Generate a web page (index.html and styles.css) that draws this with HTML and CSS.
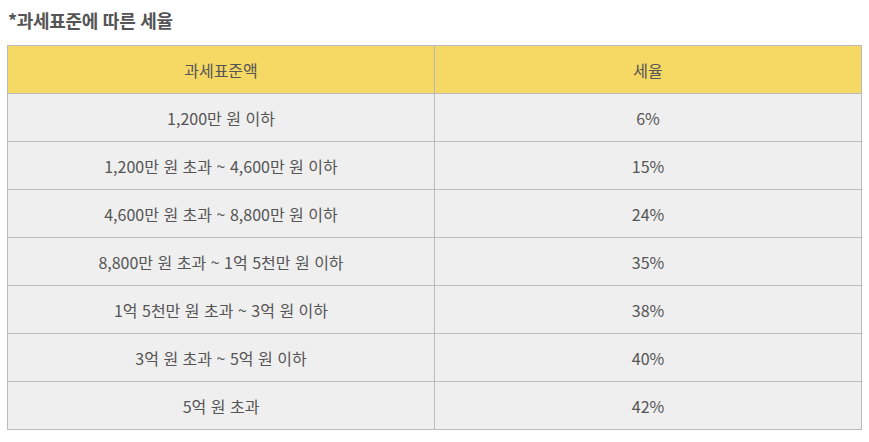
FILE: index.html
```html
<!DOCTYPE html>
<html lang="ko">
<head>
<meta charset="utf-8">
<link rel="stylesheet" href="styles.css">
</head>
<body>
<div class="wrap">
  <h3 class="title">*과세표준에 따른 세율</h3>
  <table class="tax">
    <thead>
      <tr><th>과세표준액</th><th>세율</th></tr>
    </thead>
    <tbody>
      <tr><td>1,200만 원 이하</td><td>6%</td></tr>
      <tr><td>1,200만 원 초과 ~ 4,600만 원 이하</td><td>15%</td></tr>
      <tr><td>4,600만 원 초과 ~ 8,800만 원 이하</td><td>24%</td></tr>
      <tr><td>8,800만 원 초과 ~ 1억 5천만 원 이하</td><td>35%</td></tr>
      <tr><td>1억 5천만 원 초과 ~ 3억 원 이하</td><td>38%</td></tr>
      <tr><td>3억 원 초과 ~ 5억 원 이하</td><td>40%</td></tr>
      <tr><td>5억 원 초과</td><td>42%</td></tr>
    </tbody>
  </table>
</div>
</body>
</html>
```
FILE: styles.css
```css
html, body { margin: 0; padding: 0; background: #fff; }
body { font-family: "Noto Sans CJK KR", "Noto Sans", sans-serif; color: #555; }
.wrap { padding: 8px 8px 0 7px; }
.title { margin: 0 0 13px 1px; font-size: 18px; letter-spacing: -0.3px; font-weight: bold; line-height: 24px; color: #555; }
.tax { width: 855px; border-collapse: collapse; table-layout: fixed; }
.tax th, .tax td { border: 1px solid #bbb; height: 47px; padding: 0; text-align: center; font-size: 16px; font-weight: normal; color: #555; }
.tax th { background: #f6d864; }
.tax td { background: #efefef; }
```
